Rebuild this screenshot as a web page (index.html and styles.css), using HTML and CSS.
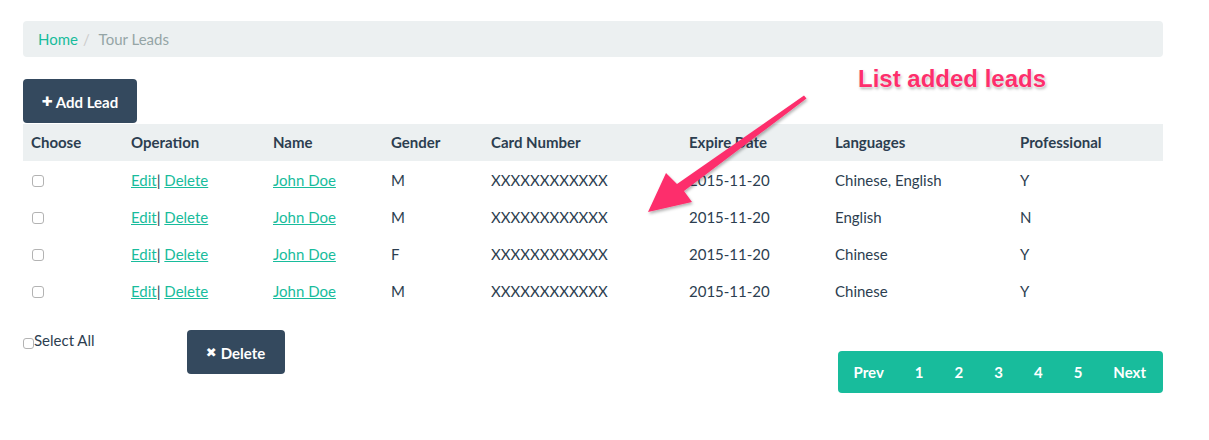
FILE: index.html
```html
<!DOCTYPE html>
<html>
<head>
<meta charset="utf-8">
<title>Tour Leads</title>
<link rel="stylesheet" href="styles.css">
</head>
<body>
<div class="page">
  <ol class="breadcrumb">
    <li><a href="#">Home</a></li>
    <li class="active">Tour Leads</li>
  </ol>

  <button class="btn btn-dark btn-add"><span class="ico">&#x271A;</span>Add Lead</button>

  <table class="leads">
    <thead>
      <tr>
        <th class="c1">Choose</th>
        <th class="c2">Operation</th>
        <th class="c3">Name</th>
        <th class="c4">Gender</th>
        <th class="c5">Card Number</th>
        <th class="c6">Expire Date</th>
        <th class="c7">Languages</th>
        <th class="c8">Professional</th>
      </tr>
    </thead>
    <tbody>
      <tr>
        <td><input type="checkbox" class="cb"></td>
        <td><a href="#">Edit</a>| <a href="#">Delete</a></td>
        <td><a href="#">John Doe</a></td>
        <td>M</td>
        <td>XXXXXXXXXXXX</td>
        <td>2015-11-20</td>
        <td>Chinese, English</td>
        <td>Y</td>
      </tr>
      <tr>
        <td><input type="checkbox" class="cb"></td>
        <td><a href="#">Edit</a>| <a href="#">Delete</a></td>
        <td><a href="#">John Doe</a></td>
        <td>M</td>
        <td>XXXXXXXXXXXX</td>
        <td>2015-11-20</td>
        <td>English</td>
        <td>N</td>
      </tr>
      <tr>
        <td><input type="checkbox" class="cb"></td>
        <td><a href="#">Edit</a>| <a href="#">Delete</a></td>
        <td><a href="#">John Doe</a></td>
        <td>F</td>
        <td>XXXXXXXXXXXX</td>
        <td>2015-11-20</td>
        <td>Chinese</td>
        <td>Y</td>
      </tr>
      <tr>
        <td><input type="checkbox" class="cb"></td>
        <td><a href="#">Edit</a>| <a href="#">Delete</a></td>
        <td><a href="#">John Doe</a></td>
        <td>M</td>
        <td>XXXXXXXXXXXX</td>
        <td>2015-11-20</td>
        <td>Chinese</td>
        <td>Y</td>
      </tr>
    </tbody>
  </table>

  <div class="bottom">
    <label class="select-all"><input type="checkbox" class="cb cb-all">Select All</label>
    <button class="btn btn-dark btn-del"><span class="ico-x">&#x2716;</span>Delete</button>
    <ul class="pagination">
      <li><a href="#">Prev</a></li>
      <li><a href="#">1</a></li>
      <li><a href="#">2</a></li>
      <li><a href="#">3</a></li>
      <li><a href="#">4</a></li>
      <li><a href="#">5</a></li>
      <li><a href="#">Next</a></li>
    </ul>
  </div>

  <div class="note">List added leads</div>
  <svg class="arrow" width="1209" height="440" viewBox="0 0 1209 440">
    <defs>
      <filter id="sh" x="-20%" y="-20%" width="140%" height="140%">
        <feDropShadow dx="1" dy="2" stdDeviation="1.5" flood-color="#000" flood-opacity="0.3"/>
      </filter>
    </defs>
    <polygon filter="url(#sh)" fill="#fd2f6c" points="804,95.5 806.5,98.5 684,191 692,202 648,212 666,173 677,184"/>
  </svg>
</div>
</body>
</html>
```

FILE: styles.css
```css
* { box-sizing: border-box; }

html, body {
  margin: 0;
  padding: 0;
  background: #fff;
}

body {
  font-family: Lato, "Open Sans", "Liberation Sans", sans-serif;
  font-size: 15px;
  line-height: 21px;
  color: #2c3e50;
}

.page {
  position: relative;
  width: 1209px;
  height: 440px;
  padding: 21px 46px 0 23px;
}

a {
  color: #18bc9c;
  text-decoration: underline;
}

.breadcrumb {
  display: flex;
  list-style: none;
  margin: 0 0 22px 0;
  padding: 8px 15px 7px;
  height: 36px;
  background: #ecf0f1;
  border-radius: 4px;
}

.breadcrumb a {
  text-decoration: none;
}

.breadcrumb li + li::before {
  content: "/\00a0";
  padding: 0 5px;
  color: #ccc;
}

.breadcrumb .active {
  color: #95a5a6;
}

.btn {
  display: inline-flex;
  align-items: center;
  justify-content: center;
  height: 44px;
  border: 0;
  border-radius: 4px;
  font-family: Lato, "Open Sans", "Liberation Sans", sans-serif;
  font-size: 15px;
  font-weight: 700;
  color: #fff;
  cursor: pointer;
}

.btn-dark {
  background: #34495e;
}

.btn-add {
  display: flex;
  width: 114px;
  padding: 0;
  padding-top: 1px;
}

.ico {
  font-size: 13px;
  margin-right: 3px;
  font-family: "DejaVu Sans", sans-serif;
}

.ico-x {
  font-size: 13px;
  margin-right: 4px;
  font-family: "DejaVu Sans", sans-serif;
}

.leads {
  width: 1140px;
  margin-top: 1px;
  border-collapse: collapse;
  table-layout: fixed;
}

.leads th,
.leads td {
  padding: 8px;
  height: 37px;
  text-align: left;
  vertical-align: middle;
  white-space: nowrap;
}

.leads thead th {
  background: #ecf0f1;
  font-weight: 700;
  padding-top: 8px;
  padding-bottom: 8px;
}

.leads tbody td {
  padding-top: 9px;
  padding-bottom: 7px;
}

.c1 { width: 100px; }
.c2 { width: 142px; }
.c3 { width: 118px; }
.c4 { width: 100px; }
.c5 { width: 198px; }
.c6 { width: 146px; }
.c7 { width: 185px; }
.c8 { width: 151px; }

.cb {
  -webkit-appearance: none;
  appearance: none;
  display: block;
  width: 12px;
  height: 12px;
  margin: 0 0 0 1px;
  border: 1px solid #b3b3b3;
  border-radius: 3px;
  background: #fff;
}

.bottom {
  display: flex;
  align-items: flex-start;
  margin-top: 21px;
}

.select-all {
  display: flex;
  align-items: center;
  height: 21px;
  margin-top: 0;
}

.cb-all {
  width: 11px;
  height: 11px;
  margin: 6px 0 0 0;
}

.btn-del {
  width: 98px;
  margin-left: 92px;
  padding: 0;
  padding-top: 1px;
}

.pagination {
  display: flex;
  list-style: none;
  margin: 21px 0 0 auto;
  padding: 0;
  background: #18bc9c;
  border-radius: 4px;
  height: 42px;
}

.pagination a {
  display: block;
  padding: 11px 16px 10px 15px;
  font-weight: 700;
  color: #fff;
  text-decoration: none;
  line-height: 21px;
}

.pagination li:first-child a { padding-left: 16px; padding-right: 16px; }
.pagination li:last-child a { padding-right: 17px; }

.note {
  position: absolute;
  left: 858px;
  top: 67px;
  font-family: "Liberation Sans", Arial, sans-serif;
  font-size: 24px;
  font-weight: 700;
  line-height: 24px;
  color: #fd2f6c;
  text-shadow: 0 0 1px #fff, 0 0 2px #fff, 1px 2px 3px rgba(0, 0, 0, 0.3);
}

.arrow {
  position: absolute;
  left: 0;
  top: 0;
  pointer-events: none;
}
```
